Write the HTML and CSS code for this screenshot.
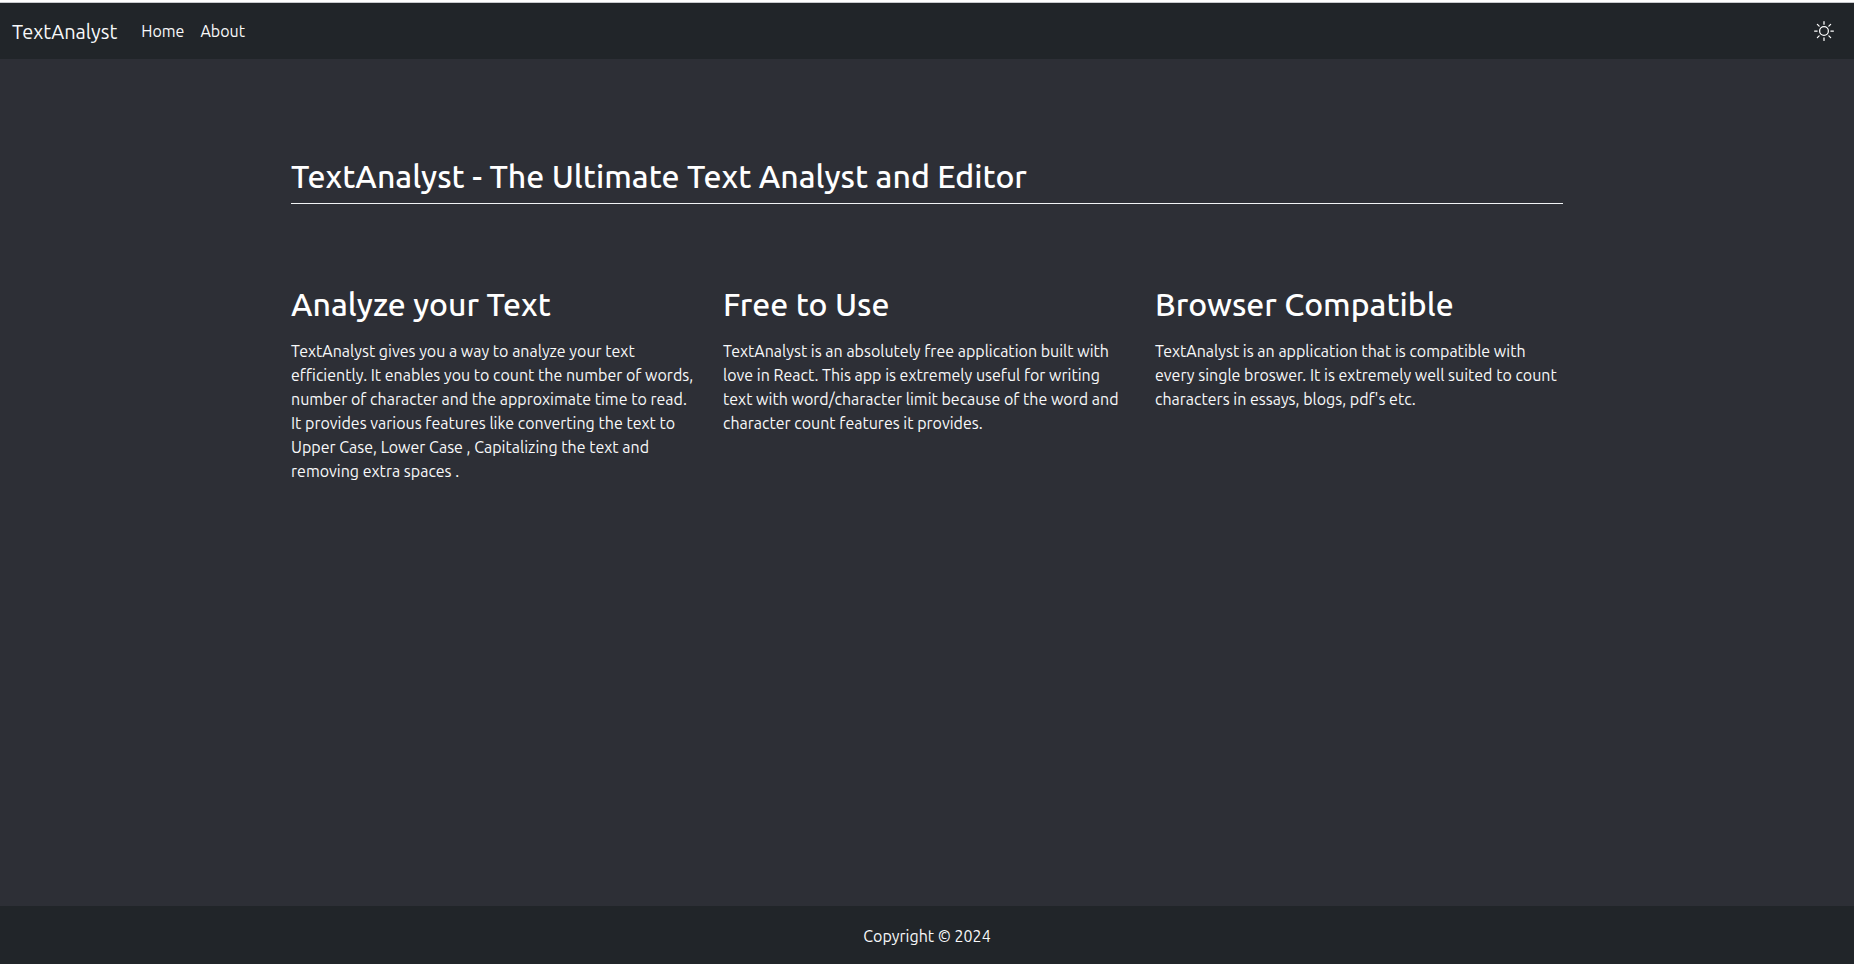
FILE: index.html
```html
<!DOCTYPE html>
<html lang="en">
<head>
<meta charset="utf-8">
<meta name="viewport" content="width=device-width, initial-scale=1">
<title>TextAnalyst</title>
<link rel="stylesheet" href="styles.css">
</head>
<body>
<nav class="navbar">
  <a class="brand" href="#">TextAnalyst</a>
  <a class="nav-link" href="#">Home</a>
  <a class="nav-link" href="#about">About</a>
  <button class="theme-toggle" type="button" aria-label="Toggle theme">
    <svg width="20" height="20" viewBox="0 0 16 16" fill="currentColor" aria-hidden="true"><path d="M8 11a3 3 0 1 1 0-6 3 3 0 0 1 0 6m0 1a4 4 0 1 0 0-8 4 4 0 0 0 0 8M8 0a.5.5 0 0 1 .5.5v2a.5.5 0 0 1-1 0v-2A.5.5 0 0 1 8 0m0 13a.5.5 0 0 1 .5.5v2a.5.5 0 0 1-1 0v-2A.5.5 0 0 1 8 13m8-5a.5.5 0 0 1-.5.5h-2a.5.5 0 0 1 0-1h2a.5.5 0 0 1 .5.5M3 8a.5.5 0 0 1-.5.5h-2a.5.5 0 0 1 0-1h2A.5.5 0 0 1 3 8m10.657-5.657a.5.5 0 0 1 0 .707l-1.414 1.415a.5.5 0 1 1-.707-.708l1.414-1.414a.5.5 0 0 1 .707 0m-9.193 9.193a.5.5 0 0 1 0 .707L3.05 13.657a.5.5 0 0 1-.707-.707l1.414-1.414a.5.5 0 0 1 .707 0m9.193 2.121a.5.5 0 0 1-.707 0l-1.414-1.414a.5.5 0 0 1 .707-.707l1.414 1.414a.5.5 0 0 1 0 .707M4.464 4.465a.5.5 0 0 1-.707 0L2.343 3.05a.5.5 0 1 1 .707-.707l1.414 1.414a.5.5 0 0 1 0 .708"/></svg>
  </button>
</nav>
<main class="container" id="about">
  <h1 class="title">TextAnalyst - The Ultimate Text Analyst and Editor</h1>
  <div class="features">
    <section class="feature">
      <h2 class="feature-title">Analyze your Text</h2>
      <p class="feature-text">TextAnalyst gives you a way to analyze your text efficiently. It enables you to count the number of words, number of character and the approximate time to read. It provides various features like converting the text to Upper Case, Lower Case , Capitalizing the text and removing extra spaces .</p>
    </section>
    <section class="feature">
      <h2 class="feature-title">Free to Use</h2>
      <p class="feature-text">TextAnalyst is an absolutely free application built with love in React. This app is extremely useful for writing text with word/character limit because of the word and character count features it provides.</p>
    </section>
    <section class="feature">
      <h2 class="feature-title">Browser Compatible</h2>
      <p class="feature-text">TextAnalyst is an application that is compatible with every single broswer. It is extremely well suited to count characters in essays, blogs, pdf's etc.</p>
    </section>
  </div>
</main>
<footer class="footer">Copyright © 2024</footer>
</body>
</html>
```
FILE: styles.css
```css
* {
  box-sizing: border-box;
}

body {
  display: flex;
  flex-direction: column;
  min-height: 100vh;
  margin: 0;
  border-top: 2px solid #fff;
  background: #2d2f36;
  color: #f8f9fa;
  font-family: Ubuntu, "Noto Sans", sans-serif;
  font-size: 16px;
  line-height: 24px;
}

.navbar {
  display: flex;
  align-items: center;
  gap: 16px;
  height: 57px;
  padding: 0 20px 0 12px;
  border-top: 1px solid #c8cacd;
  background: #212529;
}

.brand,
.nav-link {
  color: inherit;
  text-decoration: none;
}

.brand {
  margin-right: 8px;
  font-size: 20px;
  line-height: 31px;
}

.theme-toggle {
  display: flex;
  margin-left: auto;
  padding: 0;
  border: 0;
  background: none;
  color: #fff;
}

.container {
  flex: 1;
  width: 100%;
  max-width: 1320px;
  margin: 0 auto;
  padding: 98px 24px 48px;
}

.title,
.feature-title {
  margin: 0;
  color: #fff;
  font-size: 32px;
  font-weight: 500;
  line-height: 38px;
}

.title {
  padding-bottom: 8px;
  border-bottom: 1px solid #f1f3f5;
}

.features {
  display: grid;
  grid-template-columns: repeat(3, 1fr);
  gap: 24px;
  padding-top: 81px;
}

.feature-title {
  margin-bottom: 16px;
}

.feature-text {
  margin: 0;
}

.footer {
  padding: 18px 16px 16px;
  background: #212529;
  text-align: center;
}
```
